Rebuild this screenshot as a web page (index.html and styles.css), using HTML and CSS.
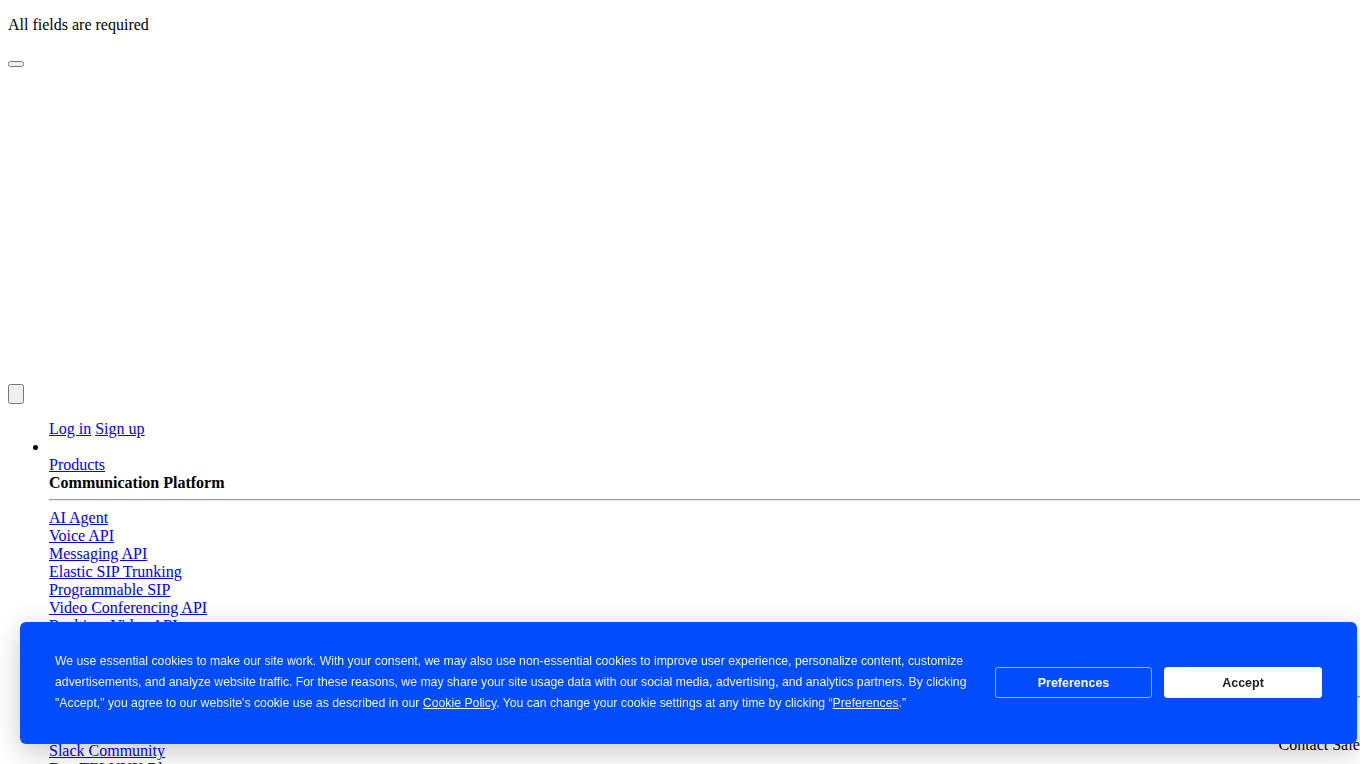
FILE: index.html
```html
<!DOCTYPE html>
<html lang="en">
<head>
<meta charset="utf-8">
<title>Telnyx</title>
<link rel="stylesheet" href="styles.css">
</head>
<body>
<div class="page">
  <p class="form-note">All fields are required</p>
  <div class="form-actions"><button class="submit-btn" type="button"></button></div>
  <div class="captcha-slot"></div>

  <header class="site-header">
    <button class="menu-toggle" type="button"><span class="toggle-icon"></span></button>
    <ul class="nav-list">
      <li class="nav-auth"><a href="#">Log in</a> <a href="#">Sign up</a></li>
      <li class="nav-item"><span class="nav-marker"></span>
        <div class="nav-menu">
          <a href="#">Products</a>
          <div class="menu-section">
            <strong class="menu-heading">Communication Platform</strong>
            <hr class="menu-rule">
            <div class="menu-links">
              <a href="#">AI Agent</a>
              <a href="#">Voice API</a>
              <a href="#">Messaging API</a>
              <a href="#">Elastic SIP Trunking</a>
              <a href="#">Programmable SIP</a>
              <a href="#">Video Conferencing API</a>
              <a href="#">Realtime Video API</a>
              <a href="#">Networking</a>
              <a href="#">IoT SIM Cards</a>
            </div>
          </div>
          <div class="menu-section">
            <strong class="menu-heading">Resources</strong>
            <hr class="menu-rule">
            <div class="menu-split">
              <div class="menu-links">
                <a href="#">Developer Docs</a>
                <a href="#">API Reference</a>
                <a href="#">Slack Community</a>
                <a href="#">Dev TELNYX Blog</a>
              </div>
              <div class="menu-cta">Contact Sales</div>
            </div>
          </div>
        </div>
      </li>
    </ul>
  </header>
</div>

<div class="cookie-banner">
  <p class="cookie-text">We use essential cookies to make our site work. With your consent, we may also use non-essential cookies to improve user experience, personalize content, customize advertisements, and analyze website traffic. For these reasons, we may share your site usage data with our social media, advertising, and analytics partners. By clicking "Accept," you agree to our website's cookie use as described in our <a href="#" class="cookie-link">Cookie Policy</a>. You can change your cookie settings at any time by clicking “<a href="#" class="cookie-link">Preferences</a>.”</p>
  <div class="cookie-actions">
    <button class="cookie-btn cookie-btn-outline" type="button">Preferences</button>
    <button class="cookie-btn cookie-btn-solid" type="button">Accept</button>
  </div>
</div>
</body>
</html>
```
FILE: styles.css
```css
html {
  overflow: hidden;
}
body {
  margin: 0;
  font-family: "Liberation Serif", "Times New Roman", serif;
  font-size: 16px;
  color: #000;
}
.page {
  width: 1358px;
  padding: 16px 8px 0;
}
.form-note {
  margin: 0 0 16px;
}
.form-actions {
  padding-top: 11px;
}
.submit-btn {
  display: block;
}
.captcha-slot {
  height: 317px;
}
.menu-toggle {
  display: block;
}
.toggle-icon {
  display: block;
  width: 0;
  height: 14px;
}
.nav-list {
  margin: 16px 0 0;
  padding-left: 41px;
}
.nav-auth {
  list-style: none;
}
.nav-marker {
  display: inline-block;
  width: 0;
  height: 0;
}
.nav-menu a,
.nav-auth a {
  color: #0000ee;
}
.menu-heading {
  display: block;
}
.menu-rule {
  margin: 7px 0 8px;
}
.menu-links {
  display: flex;
  flex-direction: column;
  align-items: flex-start;
}
.menu-split {
  display: flex;
  justify-content: space-between;
}
.menu-cta {
  padding-top: 30px;
}
.cookie-banner {
  position: fixed;
  left: 20px;
  top: 622px;
  width: 1337px;
  box-sizing: border-box;
  padding: 29px 35px 30px;
  background: #004cff;
  border-radius: 6px;
  box-shadow: 0 8px 28px rgba(0, 0, 0, 0.22);
  display: flex;
  align-items: center;
  gap: 22px;
  font-family: "Liberation Sans", Arial, sans-serif;
}
.cookie-text {
  margin: 0;
  flex: 1;
  font-size: 12.25px;
  line-height: 21px;
  color: #f2f5ff;
}
.cookie-link {
  color: #f2f5ff;
  text-decoration: underline;
}
.cookie-actions {
  display: flex;
  gap: 12px;
  flex-shrink: 0;
}
.cookie-btn {
  width: 157px;
  height: 31px;
  border-radius: 3px;
  font-family: "Liberation Sans", Arial, sans-serif;
  font-size: 12.5px;
  font-weight: bold;
  cursor: pointer;
}
.cookie-btn-outline {
  background: transparent;
  color: #ffffff;
  border: 1.5px solid #9dbaff;
}
.cookie-btn-solid {
  width: 158px;
  background: #ffffff;
  color: #1e1e1e;
  border: 1px solid #ffffff;
}
```
